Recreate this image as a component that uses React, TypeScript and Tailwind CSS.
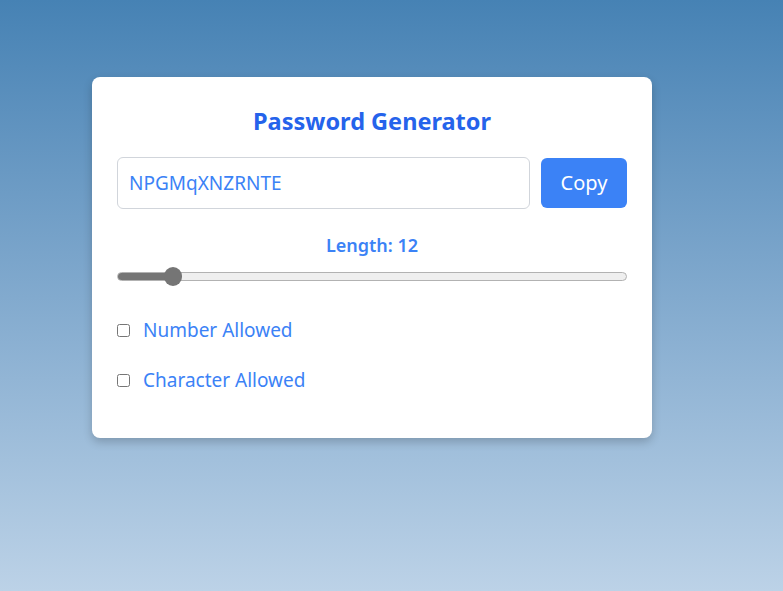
import { useState } from 'react';

const MIN = 8;
const MAX = 50;

export default function App() {
  const [length, setLength] = useState(12);
  const [numberAllowed, setNumberAllowed] = useState(false);
  const [charAllowed, setCharAllowed] = useState(false);
  const password = 'NPGMqXNZRNTE';

  // thumb is 18px wide, track 510px
  const thumbLeft = ((length - MIN) / (MAX - MIN)) * (510 - 18);

  return (
    <div
      className="w-full h-[591px] bg-gradient-to-b from-[#4682b4] to-[#bcd2e7] pt-[77px] pl-[92px]"
      style={{ fontFamily: '"Noto Sans", "Open Sans", sans-serif' }}
    >
      <div className="w-[560px] h-[361px] bg-white rounded-lg shadow-[0_4px_10px_rgba(0,0,0,0.2)] px-[25px] pt-[27px]">
        <h1 className="text-center text-[23.5px] leading-[34px] font-bold text-[#2563eb]">Password Generator</h1>

        <div className="flex items-center gap-[11px] mt-[19px]">
          <input
            type="text"
            readOnly
            value={password}
            className="flex-1 h-[52px] border border-[#d1d5db] rounded-md px-[11px] text-[19px] text-[#3b82f6] outline-none"
          />
          <button className="w-[86px] h-[50px] bg-[#3b82f6] text-white text-[20px] rounded-md">Copy</button>
        </div>

        <div className="mt-[23px] flex flex-col">
          <label className="text-center text-[18px] leading-[26px] font-semibold text-[#3b82f6]">Length: {length}</label>
          {/* Slider */}
          <div className="relative h-[19px] mt-[9px] flex items-center">
            <div className="w-full h-[9px] rounded-full border border-[#b2b2b2] bg-[#efefef] overflow-hidden">
              <div className="h-full bg-[#757575]" style={{ width: `${thumbLeft + 9}px` }} />
            </div>
            <div
              className="absolute top-0 w-[18px] h-[19px] rounded-full bg-[#757575]"
              style={{ left: `${thumbLeft}px` }}
            />
            <input
              type="range"
              min={MIN}
              max={MAX}
              value={length}
              onChange={e => setLength(Number(e.target.value))}
              className="absolute inset-0 w-full opacity-0 cursor-pointer"
            />
          </div>
        </div>

        <div className="mt-[31px] flex flex-col gap-[24px]">
          <label className="flex items-center gap-[13px] text-[19px] leading-[26px] text-[#3b82f6]">
            <input type="checkbox" checked={numberAllowed} onChange={() => setNumberAllowed(!numberAllowed)} className="w-[13px] h-[13px]" />
            Number Allowed
          </label>
          <label className="flex items-center gap-[13px] text-[19px] leading-[26px] text-[#3b82f6]">
            <input type="checkbox" checked={charAllowed} onChange={() => setCharAllowed(!charAllowed)} className="w-[13px] h-[13px]" />
            Character Allowed
          </label>
        </div>
      </div>
    </div>
  );
}
